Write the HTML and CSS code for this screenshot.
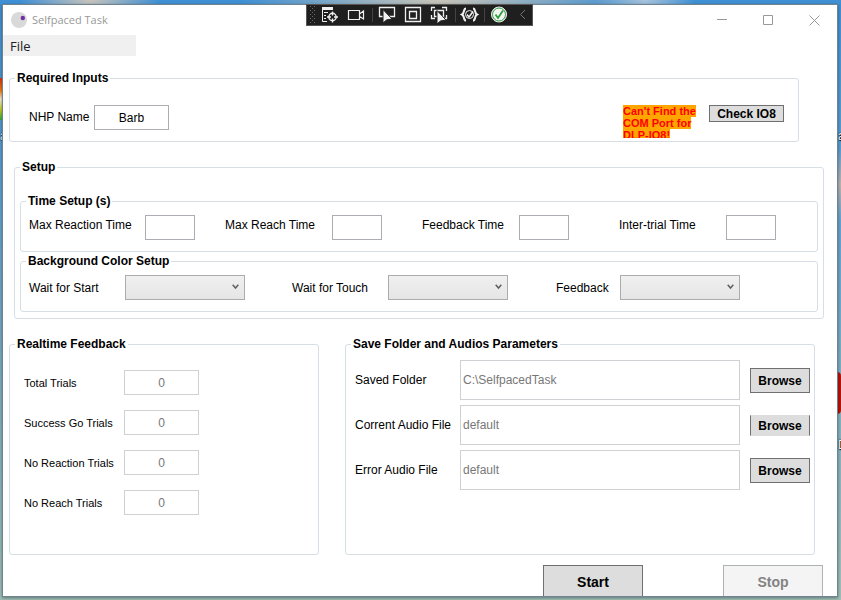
FILE: index.html
```html
<!DOCTYPE html>
<html lang="en">
<head>
<meta charset="utf-8">
<title>Selfpaced Task</title>
<link rel="stylesheet" href="styles.css">
</head>
<body>
<div class="desk desk-rainbow"></div>
<div class="desk desk-red"></div>
<div class="desk desk-name desk-name-left">a</div>
<div class="desk desk-name desk-name-right">a</div>
<div class="desk desk-name desk-name-low">D</div>

<main class="window">
  <header class="titlebar">
    <svg class="app-icon" width="16" height="16" viewBox="0 0 16 16" aria-hidden="true"><circle cx="8" cy="8" r="8" fill="#d9d9d9"/><circle cx="11.800" cy="6" r="2.200" fill="#7030a0"/></svg>
    <h1>Selfpaced Task</h1>
    <div class="caption">
      <button aria-label="Minimize"><svg width="11" height="11" viewBox="0 0 11 11"><path d="M0 4.500H10"/></svg></button>
      <button aria-label="Maximize"><svg width="11" height="11" viewBox="0 0 11 11"><path d="M.5.5H9.500V9.500H.5Z"/></svg></button>
      <button aria-label="Close"><svg width="11" height="11" viewBox="0 0 11 11"><path d="M.5.5 10.500 10.500M10.500.5.5 10.500"/></svg></button>
    </div>
  </header>
  <nav class="menu"><button>File</button></nav>

  <fieldset class="required">
    <legend>Required Inputs</legend>
    <label for="nhp">NHP Name</label>
    <input id="nhp" class="box" value="Barb">
    <p class="alert"><span>Can't Find the COM Port for DLP-IO8!</span></p>
    <button class="btn check">Check IO8</button>
  </fieldset>

  <fieldset class="setup">
    <legend>Setup</legend>
    <fieldset class="times">
      <legend>Time Setup (s)</legend>
      <label for="t1">Max Reaction Time</label><input id="t1" class="box">
      <label for="t2">Max Reach Time</label><input id="t2" class="box">
      <label for="t3">Feedback Time</label><input id="t3" class="box">
      <label for="t4">Inter-trial Time</label><input id="t4" class="box">
    </fieldset>
    <fieldset class="colors">
      <legend>Background Color Setup</legend>
      <label for="c1">Wait for Start</label><span class="pick"><select id="c1"></select><svg width="7" height="6" viewBox="0 0 7 6"><path d="M.7.8 3.500 4 6.300.8"/></svg></span>
      <label for="c2">Wait for Touch</label><span class="pick"><select id="c2"></select><svg width="7" height="6" viewBox="0 0 7 6"><path d="M.7.8 3.500 4 6.300.8"/></svg></span>
      <label for="c3">Feedback</label><span class="pick"><select id="c3"></select><svg width="7" height="6" viewBox="0 0 7 6"><path d="M.7.8 3.500 4 6.300.8"/></svg></span>
    </fieldset>
  </fieldset>

  <div class="lower">
    <fieldset class="realtime">
      <legend>Realtime Feedback</legend>
      <label for="r1">Total Trials</label><input id="r1" class="box" value="0" disabled>
      <label for="r2">Success Go Trials</label><input id="r2" class="box" value="0" disabled>
      <label for="r3">No Reaction Trials</label><input id="r3" class="box" value="0" disabled>
      <label for="r4">No Reach Trials</label><input id="r4" class="box" value="0" disabled>
    </fieldset>
    <fieldset class="save">
      <legend>Save Folder and Audios Parameters</legend>
      <label for="s1">Saved Folder</label><input id="s1" class="box" value="C:\SelfpacedTask" disabled><button class="btn">Browse</button>
      <label for="s2">Corrent Audio File</label><input id="s2" class="box" value="default" disabled><button class="btn short">Browse</button>
      <label for="s3">Error Audio File</label><input id="s3" class="box" value="default" disabled><button class="btn">Browse</button>
    </fieldset>
  </div>

  <footer class="actions">
    <button class="btn">Start</button>
    <button class="btn" disabled>Stop</button>
  </footer>
</main>

<div class="debugbar">
  <svg width="227" height="22" viewBox="0 0 227 22" fill="none" stroke="#f0f0f0" aria-hidden="true">
    <g stroke="#6a6a6a" stroke-dasharray="1 3"><path d="M4.500 2V20M8.500 2V20"/><path d="M6.500 4V20"/></g>
    <path d="M16 4.500H27" stroke-width="3"/><path d="M16.500 3V17.500H21M18 8.500H22M18 11.500H20M18 14.500H20"/>
    <circle cx="26.500" cy="13" r="3.700" stroke-width="1.400"/><path d="M26.500 7.500V11.500M26.500 14.500V18.500M21 13H25M28 13H32" stroke-width="1.400"/>
    <path d="M42.500 6.500H53.500V15.500H42.500ZM53.500 10 57.500 7V15L53.500 12.500" stroke-width="1.200"/>
    <path d="M66.500 4V18M149.500 4V18M178.500 4V18" stroke="#444"/>
    <path d="M73.500 3.500H88.500V12.500H73.500Z" stroke-width="1.300"/><path d="M77 5.500V19L80.500 16 86 15Z" fill="#f0f0f0" stroke="#1f1f1f"/>
    <path d="M99.500 3.500H114.500V17.500H99.500ZM103.500 7.500H110.500V14.500H103.500Z" stroke-width="1.300"/>
    <path d="M125.500 7V3.500H129M136 3.500H140.500V7M140.500 11V14.500H138M129 14.500H125.500V11M128.500 6.500H137.500V12.500H128.500Z" stroke-width="1.300"/><path d="M131 6.500V20L134.500 17 140 16Z" fill="#f0f0f0" stroke="#1f1f1f"/>
    <path d="M160 4.500C157 4.500 159 9 156 10.500C159 12 157 16.500 160 16.500M167 4.500C170 4.500 168 9 171 10.500C168 12 170 16.500 167 16.500" stroke-width="2"/><circle cx="163.500" cy="10.500" r="4"/><path d="M161 10.500 163 13 167 7.500" stroke-width="1.500"/>
    <circle cx="193" cy="10.500" r="7.500" fill="#f4f4f4" stroke="#f4f4f4"/><circle cx="193" cy="10.500" r="6.500" stroke="#2e9e3e"/><path d="M189.500 10.500 192 14 197 6.500" stroke="#2e9e3e" stroke-width="1.800"/>
    <path d="M219 6 214.500 10.500 219 15" stroke="#777"/>
  </svg>
</div>
</body>
</html>
```

FILE: styles.css
```css
* { box-sizing: border-box; }

body {
  position: relative;
  margin: 0;
  min-height: 100vh;
  padding: 4px 3px 3px 2px;
  display: flex;
  overflow: hidden;
  font: 12px/16px "Liberation Sans", Arial, sans-serif;
  color: #000;
  background:
    radial-gradient(ellipse 70px 40px at 90px 0, #c8c4bc, transparent),
    radial-gradient(ellipse 200px 40px at 440px 0, #c9c5b8, transparent),
    radial-gradient(ellipse 50px 30px at 645px 0, #aac4dc, transparent),
    radial-gradient(ellipse 30px 36px at 100% 185px, #bcb3ab, transparent),
    linear-gradient(#3f90d4, #62a3d2 35%, #7aaec4 60%, #9fc0b8);
}

button, input, select { font: inherit; color: inherit; margin: 0; border-radius: 0; }

.desk { position: absolute; }
.desk-rainbow { left: 0; top: 78px; width: 2px; height: 42px; background: linear-gradient(#e03010, #f08010 30%, #f4f0e0 50%, #c8d020 75%, #30b040); }
.desk-red { right: 0; top: 372px; width: 5px; height: 42px; border-radius: 0 4px 4px 0; background: #b81408; }
.desk-name { overflow: hidden; color: #fff; text-shadow: 0 0 2px #000, 1px 1px 1px #000; }
.desk-name-left { left: 0; top: 128px; width: 2px; }
.desk-name-right { right: 0; top: 128px; width: 3px; }
.desk-name-low { right: 0; top: 437px; width: 3px; }

.window {
  position: relative;
  flex: 1;
  min-width: 0;
  display: flex;
  flex-direction: column;
  background: #fff;
  border: 1px solid #6f8490;
  box-shadow: 0 1px 3px #0006;
}

.titlebar { display: flex; align-items: center; height: 30px; padding-left: 8px; }
.titlebar h1 { margin: 0 auto 0 5px; font: 11px/16px "Open Sans", "Noto Sans", sans-serif; color: #999; }
.caption { display: flex; }
.caption button { width: 46px; height: 28px; padding: 0; border: 0; background: none; display: grid; place-items: center; }
.caption svg { fill: none; stroke: #999; }

.menu { width: 133px; background: #f0f0f0; margin-bottom: 14px; }
.menu button { display: block; height: 21px; padding: 0 7px; border: 0; background: none; font: 13px/22px "Open Sans", "Noto Sans", sans-serif; color: #212121; }

fieldset {
  --inset: 0px;
  min-width: 0;
  margin: 0;
  padding: 0 0 0 var(--inset);
  border: 1px solid #d5dfe5;
  border-radius: 3px;
}
legend { margin-left: calc(5px - var(--inset)); padding: 0 2px; font-weight: bold; line-height: 16px; }

.box { width: 75px; height: 25px; padding: 0 2px; border: 1px solid #abadb3; background: #fff; text-align: center; }
.box:disabled { border-color: #d0d1d4; color: #777; }

.btn { height: 25px; padding: 2px 0 0; border: 1px solid #707070; background: #ddd; font-weight: bold; }
.btn:disabled { border-color: #adb2b5; background: #f4f4f4; color: #838383; }

.required { --inset: 19px; display: flex; align-items: flex-start; margin: 0 38px 0 6px; padding: 19px 14px 3px var(--inset); }
.required label { width: 65px; line-height: 24px; }
.alert { width: 75px; height: 33px; margin: 0 11px 0 auto; overflow: hidden; font-size: 11px; line-height: 12px; font-weight: bold; color: #f00; }
.alert span { background: orange; }
.check { width: 75px; height: 17px; padding: 0; line-height: 16px; }

.setup { --inset: 5px; margin: 17px 13px 17px 11px; padding: 18px 5px 6px; display: grid; gap: 1px; }
.times, .colors { --inset: 8px; display: grid; padding: 6px 41px 11px var(--inset); }
.times { grid-template-columns: 116fr 80fr 107fr 90fr 97fr 100fr 107fr 50px; }
.times label { line-height: 20px; }
.times .box { width: 50px; }
.colors { grid-template-columns: 96fr 167fr 96fr 168fr 64fr 120px; padding-right: 77px; padding-bottom: 10px; }
.colors label { line-height: 26px; }

.pick { position: relative; width: 120px; height: 25px; }
.pick select { display: block; appearance: none; width: 120px; height: 25px; border: 1px solid #acacac; background: linear-gradient(#f0f0f0, #e5e5e5); }
.pick svg { position: absolute; right: 6px; top: 9px; fill: none; stroke: #606060; stroke-width: 1.5; pointer-events: none; }

.lower { display: grid; grid-template-columns: 310fr 470fr; gap: 26px; margin: 0 22px 10px 6px; min-height: 219px; }
.realtime, .save { display: grid; align-content: start; align-items: center; }
.realtime { --inset: 14px; grid-template-columns: 100px 75px; row-gap: 15px; padding: 18px 14px; }
.realtime label { font-size: 11px; }
.save { --inset: 9px; grid-template-columns: 105px 1fr 60px; row-gap: 5px; padding: 8px 4px 8px var(--inset); }
.save label { line-height: 18px; }
.save .box { width: auto; height: 40px; margin-right: 10px; text-align: left; }
.save .short { height: 21px; border-top-color: #ddd; border-bottom-color: #ddd; }

.actions { display: flex; justify-content: flex-end; gap: 80px; flex: 1; padding-right: 14px; }
.actions .btn { width: 100px; height: auto; min-height: 31px; border-bottom: 0; font-size: 14px; }

.debugbar { position: absolute; top: 4px; left: 306px; width: 227px; height: 22px; background: #1f1f1f; outline: 1px solid #5a5654; outline-offset: -1px; }
.debugbar svg { display: block; }
```
